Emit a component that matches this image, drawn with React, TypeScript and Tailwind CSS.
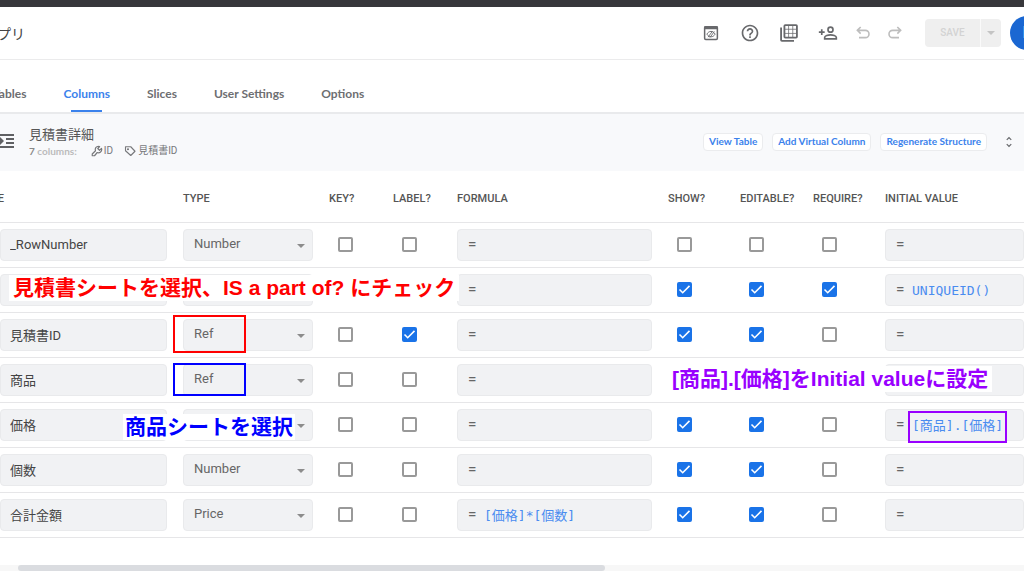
import { useState } from 'react'
import type { ReactNode } from 'react'
import { MdHelpOutline, MdUnfoldMore } from 'react-icons/md'

interface Column {
  name: string
  type: string
  key?: boolean
  label?: boolean
  formula?: string
  show?: boolean
  editable?: boolean
  require?: boolean
  initial?: string
}

type Flag = 'key' | 'label' | 'show' | 'editable' | 'require'

const initialColumns: Column[] = [
  { name: '_RowNumber', type: 'Number' },
  { name: 'ID', type: 'Text', show: true, editable: true, require: true, initial: 'UNIQUEID()' },
  { name: '見積書ID', type: 'Ref', label: true, show: true, editable: true },
  { name: '商品', type: 'Ref', show: true, editable: true },
  { name: '価格', type: 'Price', show: true, editable: true, initial: '[商品].[価格]' },
  { name: '個数', type: 'Number', show: true, editable: true },
  { name: '合計金額', type: 'Price', formula: '[価格]*[個数]', show: true, editable: true },
]

const types = ['Number', 'Text', 'Ref', 'Price']

const tabs = ['Columns', 'Slices', 'User Settings', 'Options']

const fieldBox = 'h-8 w-full rounded-sm border border-[#e9eaec] bg-[#f1f2f4]'

function PreviewIcon() {
  return (
    <svg viewBox="0 0 24 24" className="h-[18px] w-[18px]" fill="none" stroke="currentColor" strokeWidth="2">
      <rect x="3.5" y="3.5" width="17" height="17" rx="1.5" />
      <path d="M3 5h18" strokeWidth="4" />
      <path d="M6.5 13.5c1.5-2.6 3.4-3.6 5.5-3.6s4 1 5.5 3.6c-1.5 2.6-3.4 3.6-5.5 3.6s-4-1-5.5-3.6z" strokeWidth="1.2" />
      <path d="M8 17.5l6-8M10.500 18l6-8" strokeWidth="1.2" />
    </svg>
  )
}

function GridIcon() {
  return (
    <svg viewBox="0 0 24 24" className="h-5 w-5" fill="none" stroke="currentColor" strokeWidth="2.2">
      <rect x="6.5" y="2.5" width="15" height="15" rx="1" />
      <path d="M2.5 5.5v15a1 1 0 0 0 1 1H18" />
      <path d="M11.5 3v14M16.5 3v14M7 7.5h14M7 12.5h14" strokeWidth="0.9" />
    </svg>
  )
}

function PersonAddIcon() {
  return (
    <svg viewBox="0 0 24 24" className="h-5 w-5" fill="none" stroke="currentColor" strokeWidth="2">
      <circle cx="15" cy="8" r="3" />
      <path d="M8 19v-1.5c0-2 4.2-3.3 7-3.3s7 1.300 7 3.300V19z" />
      <path d="M4.500 7.500v7M1 11h7" />
    </svg>
  )
}

function UndoIcon() {
  return (
    <svg viewBox="0 0 24 24" className="h-4 w-4" fill="none" stroke="currentColor" strokeWidth="2.4">
      <path d="M8.500 3L3.500 8l5 5M4 8h11.500a5.500 5.500 0 0 1 0 11H6" />
    </svg>
  )
}

function KeyIcon() {
  return (
    <svg viewBox="0 0 24 24" className="h-3 w-3" fill="none" stroke="currentColor" strokeWidth="2.4" strokeLinejoin="round">
      <path d="M15 2.500a6.500 6.500 0 0 0-6 9L2.500 18v3.500H7L12.500 15A6.500 6.500 0 0 0 21.500 9c0-.8-.2-1.500-.5-2.200L17 10.500 13.500 7 17.200 3A6 6 0 0 0 15 2.500z" />
    </svg>
  )
}

function TagIcon() {
  return (
    <svg viewBox="0 0 24 24" className="h-3 w-3" fill="none" stroke="currentColor" strokeWidth="2.2" strokeLinejoin="round">
      <path d="M3 3.500h10.500L22 12.500l-8.500 8.500L3 11.500z" />
      <circle cx="8" cy="8.500" r="1" />
    </svg>
  )
}

function IndentIcon() {
  return (
    <svg viewBox="0 0 18 18" className="h-[18px] w-[18px]" fill="currentColor">
      <path d="M0 2h18v2H0zM10 6h8v2h-8zM10 10h8v2h-8zM0 14h18v2H0zM0 8h4V5l4 4-4 4v-3H0z" />
    </svg>
  )
}

function IconButton({ label, children }: { label: string; children: ReactNode }) {
  return (
    <button aria-label={label} className="flex w-[39px] justify-center text-[#68696c]">
      {children}
    </button>
  )
}

function Header() {
  return (
    <header className="flex h-[53px] items-center justify-between border-b border-[#ebebec]">
      <h1 className="-ml-[17px] pt-0.5 text-sm text-[#444]">アプリ</h1>
      <div className="-mr-5 flex items-center">
        <IconButton label="Preview">
          <PreviewIcon />
        </IconButton>
        <IconButton label="Help">
          <MdHelpOutline className="h-5 w-5" />
        </IconButton>
        <IconButton label="View data">
          <GridIcon />
        </IconButton>
        <IconButton label="Share">
          <PersonAddIcon />
        </IconButton>
        <button aria-label="Undo" className="flex w-8 justify-center text-[#bdbdbd]">
          <UndoIcon />
        </button>
        <button aria-label="Redo" className="flex w-8 -scale-x-100 justify-center text-[#bdbdbd]">
          <UndoIcon />
        </button>
        <div className="ml-3.5 flex h-7 overflow-hidden rounded-sm bg-[#efefef] text-[#d3d3d3]">
          <button className="w-[55px] pb-0.5 text-[10px] font-medium">SAVE</button>
          <button aria-label="Save options" className="flex w-[21px] items-center justify-center border-l border-[#fafafa]">
            <svg viewBox="0 0 8 4" className="h-1 w-2" fill="#c4c4c4">
              <path d="M0 0h8L4 4z" />
            </svg>
          </button>
        </div>
        <button aria-label="Account" className="ml-[9px] h-[34px] w-[34px] rounded-full bg-[#1a67d2] text-base text-white">
          E
        </button>
      </div>
    </header>
  )
}

function Tabs() {
  return (
    <nav className="flex h-[54px] items-end gap-[37px] border-b-2 border-[#e9eaec] font-[Lato,sans-serif] text-xs font-bold text-[#6d6e71]">
      <a href="#tables" className="-ml-[7px] pb-2.5">
        Tables
      </a>
      {tabs.map((tab) => (
        <a
          key={tab}
          href={`#${tab}`}
          className={`relative pb-2.5 ${tab === 'Columns' ? 'text-[#3b82ec]' : ''}`}
        >
          {tab}
          {tab === 'Columns' && <span className="absolute inset-x-2 bottom-0 h-0.5 bg-[#3b82ec]" />}
        </a>
      ))}
    </nav>
  )
}

function TableBar() {
  return (
    <section className="flex h-[57px] items-center bg-[#f8f9fb]">
      <div className="-ml-1 pb-1 text-[#5f6063]">
        <IndentIcon />
      </div>
      <div className="ml-[15px]">
        <h2 className="text-[13px] leading-4 text-[#555]">見積書詳細</h2>
        <div className="flex items-center text-[10px] leading-4 text-[#77787b]">
          <span className="font-[Lato,sans-serif] font-bold text-[#bbb]">
            <span className="text-[#888]">7</span> columns:
          </span>
          <span className="ml-3.5 flex items-center gap-px">
            <KeyIcon /> ID
          </span>
          <span className="ml-[11px] flex items-center gap-0.5">
            <TagIcon /> 見積書ID
          </span>
        </div>
      </div>
      <div className="ml-auto flex items-center gap-[9px] pr-2 pb-0.5 font-[Lato,sans-serif] text-[10px] font-bold text-[#3b82ec]">
        {['View Table', 'Add Virtual Column', 'Regenerate Structure'].map((action) => (
          <button key={action} className="h-[18px] rounded-sm border border-[#ebecee] bg-white px-[5px]">
            {action}
          </button>
        ))}
        <button aria-label="Expand" className="ml-1.5 text-[#68696c]">
          <MdUnfoldMore className="h-[14px] w-[14px]" />
        </button>
      </div>
    </section>
  )
}

function Checkbox({ label, checked, onChange }: { label: string; checked: boolean; onChange: () => void }) {
  return (
    <span className="relative ml-[9px] block h-[15px] w-[15px]">
      <input
        type="checkbox"
        aria-label={label}
        checked={checked}
        onChange={onChange}
        className="block h-[15px] w-[15px] appearance-none rounded-xs border-2 border-[#999] bg-white checked:border-[#1a73e8] checked:bg-[#1a73e8]"
      />
      {checked && (
        <svg
          viewBox="0 0 15 15"
          className="pointer-events-none absolute inset-0 h-[15px] w-[15px]"
          fill="none"
          stroke="white"
          strokeWidth="1.6"
        >
          <path d="M2.500 7.500l3.200 3.200 6.800-6.800" />
        </svg>
      )}
    </span>
  )
}

function FormulaField({ label, value = '' }: { label: string; value?: string }) {
  return (
    <label className={`flex items-center pl-2.5 ${fieldBox}`}>
      <span className="w-4 shrink-0 pb-px text-[15px] leading-5 font-medium text-[#666]">=</span>
      <input
        aria-label={label}
        defaultValue={value}
        className="w-full min-w-0 bg-transparent pt-0.5 font-['DejaVu_Sans_Mono','Noto_Sans_CJK_JP',monospace] text-[13px] text-[#4a8cf0] outline-none"
      />
    </label>
  )
}

function ColumnRow({ column, onToggle }: { column: Column; onToggle: (flag: Flag) => void }) {
  const check = (flag: Flag) => (
    <td className="px-2">
      <Checkbox label={`${column.name} ${flag}`} checked={!!column[flag]} onChange={() => onToggle(flag)} />
    </td>
  )

  return (
    <tr className="h-[45px] border-b border-[#e6e6e8]">
      <td className="pr-2">
        <input
          aria-label="Column name"
          defaultValue={column.name}
          className={`block px-[9px] text-[13px] text-[#444] ${fieldBox}`}
        />
      </td>
      <td className="px-2">
        <div className="relative">
          <select
            aria-label={`${column.name} type`}
            defaultValue={column.type}
            className={`block appearance-none px-2.5 pb-0.5 text-[13px] text-[#666] ${fieldBox}`}
          >
            {types.map((type) => (
              <option key={type}>{type}</option>
            ))}
          </select>
          <svg viewBox="0 0 8 4" className="pointer-events-none absolute top-[15px] right-2 h-1 w-2" fill="#8c8c8c">
            <path d="M0 0h8L4 4z" />
          </svg>
        </div>
      </td>
      {check('key')}
      {check('label')}
      <td className="px-2">
        <FormulaField label={`${column.name} formula`} value={column.formula} />
      </td>
      {check('show')}
      {check('editable')}
      {check('require')}
      <td className="pl-2">
        <FormulaField label={`${column.name} initial value`} value={column.initial} />
      </td>
    </tr>
  )
}

// Notes and frames placed on top of the table
function Annotations() {
  return (
    <div className="pointer-events-none absolute inset-0 font-['Liberation_Sans','Noto_Sans_CJK_JP',sans-serif] text-[21px] leading-[26px] font-bold whitespace-nowrap">
      <p className="absolute top-[104px] left-[9px] bg-white px-1 text-[#ff0000]">
        見積書シートを選択、IS a part of? にチェック
      </p>
      <p className="absolute top-[243px] left-[123px] bg-white px-0.5 text-[#0000ff]">商品シートを選択</p>
      <p className="absolute top-[195px] left-[668px] bg-white px-1 text-[#9900ff]">[商品].[価格]をInitial valueに設定</p>
      <span className="absolute top-[144px] left-[173px] h-[38px] w-[73px] border-2 border-[#ff0000]" />
      <span className="absolute top-[192px] left-[173px] h-[33px] w-[73px] border-2 border-[#0000ff]" />
      <span className="absolute top-[240px] left-[908px] h-8 w-[99px] border-2 border-[#9900ff]" />
    </div>
  )
}

export default function App() {
  const [columns, setColumns] = useState(initialColumns)

  const toggle = (index: number, flag: Flag) => {
    setColumns(columns.map((column, i) => (i === index ? { ...column, [flag]: !column[flag] } : column)))
  }

  return (
    <div className="min-h-screen overflow-hidden bg-white font-['Roboto','Noto_Sans_CJK_JP',sans-serif]">
      <div className="h-[7px] bg-[#37373b]" />
      <Header />
      <Tabs />
      <TableBar />
      <main className="relative">
        <table className="w-full table-fixed border-collapse">
          <colgroup>
            <col className="w-[175px]" />
            <col className="w-[146px]" />
            <col className="w-16" />
            <col className="w-16" />
            <col className="w-[211px]" />
            <col className="w-[72px]" />
            <col className="w-[73px]" />
            <col className="w-[72px]" />
            <col />
          </colgroup>
          <thead>
            <tr className="h-[51px] border-b border-[#e6e6e8] text-left text-[11px] text-[#555] [&>th]:px-2 [&>th]:pt-1.5 [&>th]:font-medium [&>th]:whitespace-nowrap">
              <th>
                <span className="-ml-[35px]">NAME</span>
              </th>
              <th>TYPE</th>
              <th>KEY?</th>
              <th>LABEL?</th>
              <th>FORMULA</th>
              <th>SHOW?</th>
              <th>EDITABLE?</th>
              <th>REQUIRE?</th>
              <th>INITIAL VALUE</th>
            </tr>
          </thead>
          <tbody>
            {columns.map((column, i) => (
              <ColumnRow key={column.name} column={column} onToggle={(flag) => toggle(i, flag)} />
            ))}
          </tbody>
        </table>
        <Annotations />
      </main>
      <div className="mt-[27px] h-1.5 bg-[#f7f7f7] pl-[18px]">
        <div className="h-1.5 w-7/12 rounded-full bg-[#dadce0]" />
      </div>
    </div>
  )
}
